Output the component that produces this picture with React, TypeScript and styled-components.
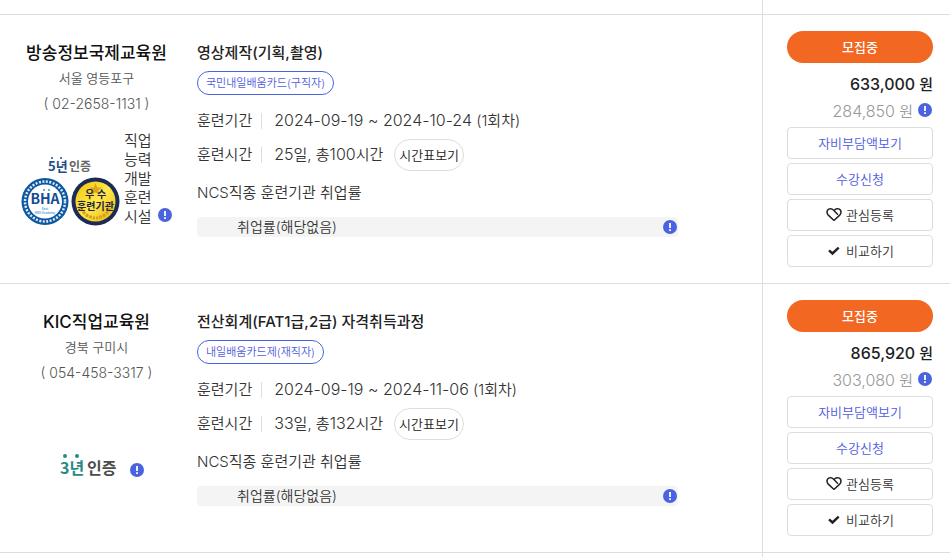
import React from "react";
import styled, { createGlobalStyle } from "styled-components";

const GlobalStyle = createGlobalStyle`
  *, *::before, *::after { box-sizing: border-box; }
  body {
    margin: 0;
    background: #fff;
    color: #333;
    font-family: Inter, "Noto Sans CJK KR", sans-serif;
    font-size: 15px;
    font-weight: 350;
    overflow-x: hidden;
    scrollbar-width: none;
  }
  button { font-family: inherit; cursor: pointer; }
`;

const List = styled.ul`
  list-style: none;
  margin: 0;
  padding: 0;
`;

const Row = styled.li`
  display: grid;
  grid-template-columns: minmax(0, 1fr) 188px;
  border-bottom: 1px solid #ddd;
`;

const Spacer = styled.div`
  height: 14px;
`;

const Main = styled.div`
  display: grid;
  grid-template-columns: 197px minmax(0, 1fr);
`;

const Side = styled.div`
  display: flex;
  flex-direction: column;
  border-left: 1px solid #ddd;
  padding: 16px 17px 16px 24px;
`;

const SideSpacer = styled(Side)`
  padding: 0;
`;

const Institute = styled.div`
  display: flex;
  flex-direction: column;
  align-items: center;
  padding: 25px 14px 0 10px;
`;

const InstituteName = styled.a`
  color: #111;
  font-size: 17px;
  font-weight: 500;
  line-height: 26px;
  text-decoration: none;
  white-space: nowrap;
`;

const InstituteInfo = styled.span<{ $size: number }>`
  color: #555;
  font-size: ${(p) => p.$size}px;
  line-height: 25px;
`;

const Certificates = styled.div<{ $top: number }>`
  display: flex;
  align-items: flex-end;
  justify-content: center;
  margin-top: ${(p) => p.$top}px;
`;

const FacilityText = styled.span`
  width: 28px;
  margin: 0 6px 0 4px;
  line-height: 19px;
  word-break: break-all;
`;

const InfoButton = styled.button`
  display: inline-flex;
  flex: none;
  padding: 0;
  border: 0;
  background: none;
`;

const CertInfo = styled.div<{ $left: number; $bottom: number }>`
  display: flex;
  margin-left: ${(p) => p.$left}px;
  padding-bottom: ${(p) => p.$bottom}px;
`;

const Course = styled.div`
  display: flex;
  flex-direction: column;
  align-items: flex-start;
  padding-top: 25px;
`;

const CourseTitle = styled.a`
  color: #222;
  font-weight: 500;
  line-height: 26px;
  text-decoration: none;
`;

const Tag = styled.span`
  height: 24px;
  margin: 5px 0 9px;
  padding: 0 8px;
  border: 1px solid #4a63e0;
  border-radius: 12px;
  color: #4f5be0;
  font-size: 11px;
  line-height: 22px;
`;

const Field = styled.div`
  display: flex;
  align-items: center;
  height: 34px;
`;

const FieldLabel = styled.span`
  padding-bottom: 3px;
`;

const FieldDivider = styled.span`
  width: 1px;
  height: 16px;
  margin: 0 12px 0 9px;
  background: #ddd;
`;

const FieldValue = styled.span`
  padding-bottom: 3px;
`;

const Figures = styled.span`
  font-size: 16px;
`;

const TimetableButton = styled.button`
  height: 32px;
  margin-left: 11px;
  padding: 0 4px 1px;
  border: 1px solid #ddd;
  border-radius: 16px;
  background: #fff;
  color: #222;
  font-size: 13px;
  font-weight: 350;
`;

const RateTitle = styled.span`
  margin: 8px 0 11px;
  line-height: 26px;
`;

const RateBar = styled.div`
  display: flex;
  align-items: center;
  justify-content: space-between;
  width: 100%;
  max-width: 481px;
  height: 20px;
  padding: 0 1px 0 40px;
  border-radius: 4px;
  background: #f4f4f4;
  font-size: 14px;
`;

const RateText = styled.span`
  padding-bottom: 2px;
`;

const Status = styled.span`
  height: 32px;
  margin-bottom: 8px;
  border-radius: 16px;
  background: #f26722;
  color: #fff;
  font-size: 13px;
  font-weight: 500;
  line-height: 32px;
  text-align: center;
`;

const Price = styled.div<{ $own?: boolean }>`
  display: flex;
  align-items: center;
  justify-content: flex-end;
  gap: 5px;
  height: 27px;
  padding-right: ${(p) => (p.$own ? 1 : 0)}px;
  padding-bottom: 3px;
  color: ${(p) => (p.$own ? "#999" : "#222")};
  font-weight: ${(p) => (p.$own ? 350 : 500)};
`;

const Actions = styled.div`
  display: grid;
  gap: 4px;
  margin-top: 2px;
`;

const ActionButton = styled.button<{ $accent?: boolean }>`
  display: flex;
  align-items: center;
  justify-content: center;
  gap: 4px;
  height: 32px;
  padding: 0 0 2px;
  border: 1px solid #ddd;
  border-radius: 4px;
  background: #fff;
  color: ${(p) => (p.$accent ? "#4f5be0" : "#333")};
  font-size: 13px;
  font-weight: 350;
`;

const Info = ({ label }: { label: string }) => (
  <InfoButton type="button" aria-label={label}>
    <svg width="14" height="14" viewBox="0 0 14 14">
      <circle cx="7" cy="7" r="7" fill="#4a63e0" />
      <path d="M7 3v5" stroke="#fff" strokeWidth="1.8" />
      <path d="M7 9.3v1.8" stroke="#fff" strokeWidth="1.8" />
    </svg>
  </InfoButton>
);

const HeartIcon = () => (
  <svg width="16" height="14" viewBox="0 0 16 14" fill="none" stroke="#222" strokeWidth="1.5" strokeLinejoin="round" strokeLinecap="round">
    <path d="M11.500 7.200 7.400 3C5.300.700 1 1.500 1 5.200c0 1.200.5 2.100 1.300 2.900L7.500 13c.3.300.7.300 1 0l5.200-4.900c.8-.8 1.300-1.700 1.300-2.900C15 1.700 11 .700 8.800 2.700" />
  </svg>
);

const CheckIcon = () => (
  <svg width="16" height="14" viewBox="0 0 16 14" fill="none" stroke="#222" strokeWidth="2.4">
    <path d="m3 7.300 3.500 3.200 6.200-5.800" />
  </svg>
);

const SvgText = styled.text`
  font-family: "Noto Sans CJK KR", sans-serif;
  font-weight: 700;
`;

const FiveYearBadges = () => (
  <svg width="99" height="70" viewBox="0 0 99 70" role="img" aria-label="5년 인증 BHA 우수 훈련기관">
    <circle cx="31" cy="2" r="1" fill="#1d4f86" />
    <circle cx="40" cy="2" r="1" fill="#1d4f86" />
    <SvgText x="27" y="15" fontSize="13" fill="#1d4f86">5년</SvgText>
    <SvgText x="48" y="15" fontSize="12" fill="#666">인증</SvgText>
    <circle cx="24" cy="45.500" r="23.500" fill="#0d57a0" />
    <circle cx="24" cy="45.500" r="20" fill="none" stroke="#dcebf8" strokeWidth="2.500" strokeDasharray="2 1.500" />
    <circle cx="24" cy="45.500" r="17" fill="#fff" />
    <SvgText x="24" y="48" fontSize="14" fill="#114b93" textAnchor="middle">BHA</SvgText>
    <circle cx="23" cy="34" r="1" fill="#2a9bd6" />
    <circle cx="28" cy="34" r="1" fill="#2a9bd6" />
    <SvgText x="24" y="54" fontSize="3" fill="#5ba9dc" textAnchor="middle">Best</SvgText>
    <SvgText x="24" y="58" fontSize="3" fill="#5ba9dc" textAnchor="middle">HRD Academy</SvgText>
    <defs>
      <linearGradient id="gold" x1="0" y1="0" x2="1" y2="1">
        <stop offset="0" stopColor="#f1c40c" />
        <stop offset=".5" stopColor="#ffe94a" />
        <stop offset="1" stopColor="#e8b30e" />
      </linearGradient>
    </defs>
    <circle cx="74.500" cy="45.500" r="24" fill="#1b2b54" />
    <circle cx="74.500" cy="45.500" r="20" fill="url(#gold)" />
    <path d="m74.500 27 1.700 4.500h4.800l-3.800 3 1.400 4.500-4.100-2.700-4.100 2.700 1.400-4.500-3.800-3h4.800z" fill="#dca51c" />
    <path d="M60 52q4 9 14 10M89 52q-4 9-14 10" fill="none" stroke="#d9a01e" strokeWidth="3" strokeDasharray="3 1" />
    <SvgText x="68.500" y="42" fontSize="10" fill="#1b2444" textAnchor="middle">우</SvgText>
    <SvgText x="80.500" y="42" fontSize="10" fill="#1b2444" textAnchor="middle">수</SvgText>
    <SvgText x="74.500" y="54" fontSize="10" fill="#1b2444" textAnchor="middle">훈련기관</SvgText>
  </svg>
);

const ThreeYearBadge = () => (
  <svg width="69" height="25" viewBox="-11 0 69 25" role="img" aria-label="3년 인증">
    <circle cx="5" cy="2" r="2" fill="#258b83" />
    <circle cx="17" cy="2" r="2" fill="#258b83" />
    <SvgText x="0" y="20" fontSize="16" fill="#258b83">3년</SvgText>
    <SvgText x="27" y="20" fontSize="16" fill="#4d4d4d">인증</SvgText>
  </svg>
);

type CourseData = {
  institute: string;
  region: string;
  phone: string;
  years: 3 | 5;
  title: string;
  tag: string;
  period: string;
  days: string;
  hours: string;
  price: string;
  own: string;
};

const courses: CourseData[] = [
  {
    institute: "방송정보국제교육원", region: "서울 영등포구", phone: "( 02-2658-1131 )", years: 5,
    title: "영상제작(기획,촬영)", tag: "국민내일배움카드(구직자)",
    period: "2024-09-19 ~ 2024-10-24", days: "25", hours: "100", price: "633,000", own: "284,850",
  },
  {
    institute: "KIC직업교육원", region: "경북 구미시", phone: "( 054-458-3317 )", years: 3,
    title: "전산회계(FAT1급,2급) 자격취득과정", tag: "내일배움카드제(재직자)",
    period: "2024-09-19 ~ 2024-11-06", days: "33", hours: "132", price: "865,920", own: "303,080",
  },
];

const CourseRow = ({ c }: { c: CourseData }) => (
  <Row>
    <Main>
      <Institute>
        <InstituteName href="#">{c.institute}</InstituteName>
        <InstituteInfo $size={13}>{c.region}</InstituteInfo>
        <InstituteInfo $size={14}>{c.phone}</InstituteInfo>
        {c.years === 5 ? (
          <Certificates $top={15}>
            <FiveYearBadges />
            <FacilityText>직업능력개발훈련시설</FacilityText>
            <CertInfo $left={0} $bottom={4}><Info label="인증 안내" /></CertInfo>
          </Certificates>
        ) : (
          <Certificates $top={69}>
            <ThreeYearBadge />
            <CertInfo $left={12} $bottom={2}><Info label="인증 안내" /></CertInfo>
          </Certificates>
        )}
      </Institute>
      <Course>
        <CourseTitle href="#">{c.title}</CourseTitle>
        <Tag>{c.tag}</Tag>
        <Field>
          <FieldLabel>훈련기간</FieldLabel>
          <FieldDivider />
          <FieldValue><Figures>{c.period}</Figures> (1회차)</FieldValue>
        </Field>
        <Field>
          <FieldLabel>훈련시간</FieldLabel>
          <FieldDivider />
          <FieldValue><Figures>{c.days}</Figures>일, 총<Figures>{c.hours}</Figures>시간</FieldValue>
          <TimetableButton type="button">시간표보기</TimetableButton>
        </Field>
        <RateTitle>NCS직종 훈련기관 취업률</RateTitle>
        <RateBar>
          <RateText>취업률(해당없음)</RateText>
          <Info label="취업률 안내" />
        </RateBar>
      </Course>
    </Main>
    <Side>
      <Status>모집중</Status>
      <Price><span><Figures>{c.price}</Figures> 원</span></Price>
      <Price $own><span><Figures>{c.own}</Figures> 원</span><Info label="자비부담액 안내" /></Price>
      <Actions>
        <ActionButton type="button" $accent>자비부담액보기</ActionButton>
        <ActionButton type="button" $accent>수강신청</ActionButton>
        <ActionButton type="button"><HeartIcon />관심등록</ActionButton>
        <ActionButton type="button"><CheckIcon />비교하기</ActionButton>
      </Actions>
    </Side>
  </Row>
);

export default function App() {
  return (
    <>
      <GlobalStyle />
      <List>
        <Row aria-hidden="true">
          <Spacer />
          <SideSpacer />
        </Row>
        {courses.map((c) => <CourseRow key={c.institute} c={c} />)}
        <Row aria-hidden="true">
          <Spacer />
          <SideSpacer />
        </Row>
      </List>
    </>
  );
}
